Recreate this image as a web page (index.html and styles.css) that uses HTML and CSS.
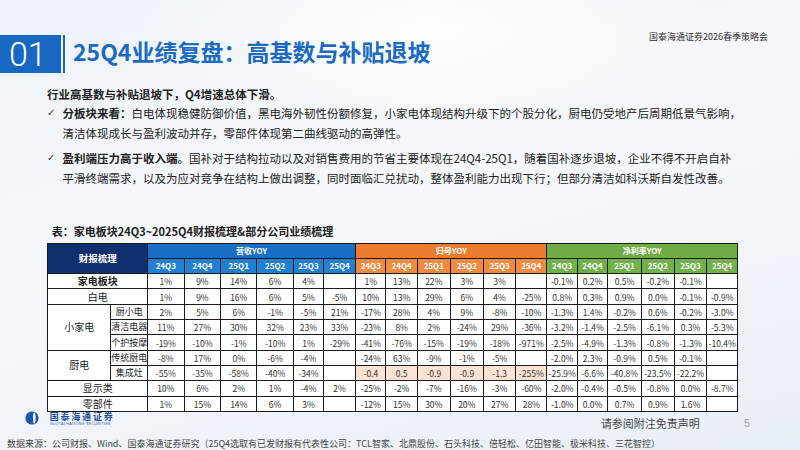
FILE: index.html
```html
<!DOCTYPE html>
<html lang="zh-CN">
<head>
<meta charset="utf-8">
<title>25Q4业绩复盘</title>
<link rel="stylesheet" href="styles.css">
</head>
<body>
<div class="slide">
  <header class="top">
    <div class="num">01</div>
    <div class="bar"></div>
    <h1 class="title">25Q4业绩复盘：高基数与补贴退坡</h1>
    <div class="brand">国泰海通证券2026春季策略会</div>
  </header>

  <section class="intro">
    <p class="lead">行业高基数与补贴退坡下，Q4增速总体下滑。</p>
    <ul class="points">
      <li><span class="check">✓</span><span class="txt"><b>分板块来看：</b>白电体现稳健防御价值，黑电海外韧性份额修复，小家电体现结构升级下的个股分化，厨电仍受地产后周期低景气影响，<br>清洁体现成长与盈利波动并存，零部件体现第二曲线驱动的高弹性。</span></li>
      <li><span class="check">✓</span><span class="txt"><b>盈利端压力高于收入端。</b>国补对于结构拉动以及对销售费用的节省主要体现在24Q4-25Q1，随着国补逐步退坡，企业不得不开启自补<br>平滑终端需求，以及为应对竞争在结构上做出调整，同时面临汇兑扰动，整体盈利能力出现下行；但部分清洁如科沃斯自发性改善。</span></li>
    </ul>
  </section>

  <div class="caption">表：家电板块24Q3~2025Q4财报梳理&amp;部分公司业绩梳理</div>

  <table class="data">
    <colgroup>
      <col class="ca"><col class="cb">
      <col class="r1"><col class="r2"><col class="r3"><col class="r4"><col class="r5"><col class="r6">
      <col class="g1"><col class="g2"><col class="g3"><col class="g4"><col class="g5"><col class="g6">
      <col class="n1"><col class="n2"><col class="n3"><col class="n4"><col class="n5"><col class="n6">
    </colgroup>
    <thead>
      <tr class="hrow">
        <th class="navy" colspan="2" rowspan="2">财报梳理</th>
        <th class="blue" colspan="6">营收YOY</th>
        <th class="orange" colspan="6">归母YOY</th>
        <th class="green" colspan="6">净利率YOY</th>
      </tr>
      <tr class="hrow">
        <th class="blue2">24Q3</th><th class="blue2">24Q4</th><th class="blue2">25Q1</th><th class="blue2">25Q2</th><th class="blue2">25Q3</th><th class="blue2">25Q4</th>
        <th class="orange2">24Q3</th><th class="orange2">24Q4</th><th class="orange2">25Q1</th><th class="orange2">25Q2</th><th class="orange2">25Q3</th><th class="orange2">25Q4</th>
        <th class="green2">24Q3</th><th class="green2">24Q4</th><th class="green2">25Q1</th><th class="green2">25Q2</th><th class="green2">25Q3</th><th class="green2">25Q4</th>
      </tr>
    </thead>
    <tbody>
      <tr>
        <td class="lab strong" colspan="2">家电板块</td>
        <td>1%</td><td>9%</td><td>14%</td><td>6%</td><td>4%</td><td></td>
        <td>1%</td><td>13%</td><td>22%</td><td>3%</td><td>3%</td><td></td>
        <td>-0.1%</td><td>0.2%</td><td>0.5%</td><td>-0.2%</td><td>-0.1%</td><td></td>
      </tr>
      <tr>
        <td class="lab" colspan="2">白电</td>
        <td>1%</td><td>9%</td><td>16%</td><td>6%</td><td>5%</td><td>-5%</td>
        <td>10%</td><td>13%</td><td>29%</td><td>6%</td><td>4%</td><td>-25%</td>
        <td>0.8%</td><td>0.3%</td><td>0.9%</td><td>0.0%</td><td>-0.1%</td><td>-0.9%</td>
      </tr>
      <tr>
        <td class="lab" rowspan="3">小家电</td>
        <td class="sub">厨小电</td>
        <td>2%</td><td>5%</td><td>6%</td><td>-1%</td><td>-5%</td><td>21%</td>
        <td>-17%</td><td>28%</td><td>4%</td><td>9%</td><td>-8%</td><td>-10%</td>
        <td>-1.3%</td><td>1.4%</td><td>-0.2%</td><td>0.6%</td><td>-0.2%</td><td>-3.0%</td>
      </tr>
      <tr>
        <td class="sub">清洁电器</td>
        <td>11%</td><td>27%</td><td>30%</td><td>32%</td><td>23%</td><td>33%</td>
        <td>-23%</td><td>8%</td><td>2%</td><td>-24%</td><td>29%</td><td>-36%</td>
        <td>-3.2%</td><td>-1.4%</td><td>-2.5%</td><td>-6.1%</td><td>0.3%</td><td>-5.3%</td>
      </tr>
      <tr>
        <td class="sub">个护按摩</td>
        <td>-19%</td><td>-10%</td><td>-1%</td><td>-10%</td><td>1%</td><td>-29%</td>
        <td>-41%</td><td>-76%</td><td>-15%</td><td>-19%</td><td>-18%</td><td>-971%</td>
        <td>-2.5%</td><td>-4.9%</td><td>-1.3%</td><td>-0.8%</td><td>-1.3%</td><td>-10.4%</td>
      </tr>
      <tr>
        <td class="lab" rowspan="2">厨电</td>
        <td class="sub">传统厨电</td>
        <td>-8%</td><td>17%</td><td>0%</td><td>-6%</td><td>-4%</td><td></td>
        <td>-24%</td><td>63%</td><td>-9%</td><td>-1%</td><td>-5%</td><td></td>
        <td>-2.0%</td><td>2.3%</td><td>-0.9%</td><td>0.5%</td><td>-0.1%</td><td></td>
      </tr>
      <tr>
        <td class="sub">集成灶</td>
        <td>-55%</td><td>-35%</td><td>-58%</td><td>-40%</td><td>-34%</td><td></td>
        <td class="hl">-0.4</td><td class="hl">0.5</td><td class="hl">-0.9</td><td class="hl">-0.9</td><td class="hl">-1.3</td><td class="hl">-255%</td>
        <td>-25.9%</td><td>-6.6%</td><td>-40.8%</td><td>-23.5%</td><td>-22.2%</td><td></td>
      </tr>
      <tr>
        <td class="lab" colspan="2">显示类</td>
        <td>10%</td><td>6%</td><td>2%</td><td>1%</td><td>-4%</td><td>2%</td>
        <td>-25%</td><td>-2%</td><td>-7%</td><td>-16%</td><td>-3%</td><td>-60%</td>
        <td>-2.0%</td><td>-0.4%</td><td>-0.5%</td><td>-0.8%</td><td>0.0%</td><td>-8.7%</td>
      </tr>
      <tr>
        <td class="lab" colspan="2">零部件</td>
        <td>1%</td><td>15%</td><td>14%</td><td>6%</td><td>3%</td><td></td>
        <td>-12%</td><td>15%</td><td>30%</td><td>20%</td><td>27%</td><td>28%</td>
        <td>-1.0%</td><td>0.0%</td><td>0.7%</td><td>0.9%</td><td>1.6%</td><td></td>
      </tr>
    </tbody>
  </table>

  <footer class="foot">
    <div class="logo">
      <svg class="logo-mark" width="14" height="14" viewBox="0 0 14 14" aria-hidden="true">
        <circle cx="7" cy="7" r="6.6" fill="#1b57a8"/>
        <ellipse cx="9.3" cy="7" rx="1.3" ry="5.6" fill="#ffffff"/>
      </svg>
      <div class="logo-text">
        <div class="logo-cn">国泰海通证券</div>
        <div class="logo-en">GUOTAI HAITONG SECURITIES</div>
      </div>
    </div>
    <div class="disclaimer">请参阅附注免责声明</div>
    <div class="page">5</div>
  </footer>

  <div class="source">数据来源：公司财报、Wind、国泰海通证券研究（25Q4选取有已发财报有代表性公司：TCL智家、北鼎股份、石头科技、倍轻松、亿田智能、极米科技、三花智控）</div>
</div>
</body>
</html>
```

FILE: styles.css
```css
html, body {
  margin: 0;
  padding: 0;
}

.slide {
  width: 800px;
  height: 450px;
  overflow: hidden;
  background:
    radial-gradient(ellipse 420px 160px at 430px 30px, rgba(255,255,255,0.85), rgba(255,255,255,0) 70%),
    linear-gradient(165deg, #eef3f9 0%, #f5f7fb 45%, #eaf0f7 100%);
  font-family: "Noto Sans CJK SC", "Noto Sans", sans-serif;
  color: #222;
}

/* header */
.top {
  display: flex;
  align-items: stretch;
  padding-top: 35px;
  height: 38px;
}

.num {
  width: 61px;
  background: #1767c3;
  color: #fff;
  font-family: Roboto, "Liberation Sans", sans-serif;
  font-weight: 300;
  font-size: 34px;
  line-height: 38px;
  padding-left: 9px;
  box-sizing: border-box;
}

.bar {
  width: 2px;
  margin-left: 1.5px;
  background: #1767c3;
}

.title {
  margin: 0 0 0 8.5px;
  font-size: 23px;
  font-weight: 700;
  line-height: 32px;
  color: #1c6bc1;
  white-space: nowrap;
}

.brand {
  margin-left: auto;
  margin-right: 32px;
  margin-top: -4px;
  align-self: flex-start;
  font-size: 9px;
  line-height: 12px;
  color: #333;
  white-space: nowrap;
}

/* intro text */
.intro {
  padding-left: 47px;
  margin-top: 13px;
  font-size: 11.5px;
  color: #222;
}

.lead {
  margin: 0;
  font-weight: 700;
  line-height: 17px;
}

.points {
  list-style: none;
  margin: 0;
  padding: 0;
}

.points li {
  display: flex;
  line-height: 20px;
  white-space: nowrap;
}

.points li + li {
  margin-top: 4.6px;
}

.check {
  flex: none;
  width: 15.5px;
  font-family: "DejaVu Sans", sans-serif;
  font-size: 10px;
  color: #333;
}

.txt b {
  font-weight: 700;
}

/* caption */
.caption {
  margin: 36.7px 0 0 51.7px;
  font-size: 11px;
  font-weight: 700;
  line-height: 14px;
  color: #222;
  white-space: nowrap;
}

/* table */
.data {
  margin: 4.3px 0 0 47.3px;
  width: 689.7px;
  table-layout: fixed;
  border-collapse: collapse;
  border: 1.5px solid #000;
  background: rgba(255,255,255,0.92);
  font-size: 8.5px;
  color: #333;
}

.ca { width: 63px; }
.cb { width: 36.7px; }
.r1 { width: 36.6px; }
.r2 { width: 36.7px; }
.r3 { width: 36px; }
.r4 { width: 36.7px; }
.r5 { width: 30px; }
.r6 { width: 32.3px; }
.g1 { width: 30px; }
.g2 { width: 31.7px; }
.g3 { width: 32.6px; }
.g4 { width: 33.4px; }
.g5 { width: 32.3px; }
.g6 { width: 31px; }
.n1 { width: 30.7px; }
.n2 { width: 30px; }
.n3 { width: 34px; }
.n4 { width: 32.6px; }
.n5 { width: 32.7px; }
.n6 { width: 30.7px; }

.data th,
.data td {
  border: 1px solid #1a1a1a;
  padding: 0;
  height: 14.3px;
  line-height: 14px;
  text-align: center;
  white-space: nowrap;
  overflow: hidden;
}

.data th {
  color: #fff;
  font-weight: 700;
  font-size: 8px;
}

.data th.navy {
  background: #102f6e;
  font-size: 9.5px;
}

.blue { background: #1a6fc4; }
.blue2 { background: #2180d2; }
.orange { background: #ec7c30; }
.orange2 { background: #ef8a40; }
.green { background: #6fac46; }
.green2 { background: #72b04a; }

.data td.lab {
  font-size: 10px;
  color: #222;
}

.data td.strong {
  font-weight: 700;
}

.data td.sub {
  font-size: 9px;
  color: #222;
  overflow: visible;
}

.data td.hl {
  background: #fbe2d2;
}

/* footer */
.foot {
  display: flex;
  align-items: flex-start;
  height: 22px;
  padding-left: 24.7px;
}

.logo {
  display: flex;
  align-items: flex-start;
}

.logo-mark {
  display: block;
  margin-top: -0.5px;
}

.logo-text {
  margin-left: 11px;
  color: #1b4f9e;
}

.logo-cn {
  font-size: 9px;
  font-weight: 700;
  letter-spacing: 1.8px;
  line-height: 9px;
}

.logo-en {
  margin-top: 1px;
  font-family: "Liberation Sans", sans-serif;
  font-size: 3.6px;
  letter-spacing: 0.3px;
  line-height: 4px;
  white-space: nowrap;
}

.disclaimer {
  margin-left: auto;
  margin-top: 3.7px;
  margin-right: 44px;
  font-size: 11px;
  line-height: 14px;
  color: #444;
}

.page {
  margin-top: 3.7px;
  margin-right: 50px;
  font-family: "Liberation Sans", sans-serif;
  font-size: 11px;
  line-height: 14px;
  color: #a0a0a0;
}

.source {
  margin-top: 3.7px;
  padding-left: 7px;
  font-size: 9px;
  line-height: 12px;
  color: #444;
  white-space: nowrap;
}
```
